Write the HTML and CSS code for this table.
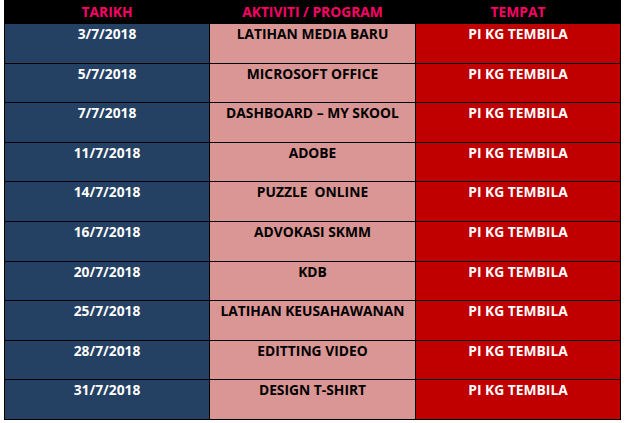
FILE: index.html
```html
<!DOCTYPE html>
<html>
<head>
<meta charset="utf-8">
<link rel="stylesheet" href="styles.css">
</head>
<body>
<div class="sheet">
  <div class="head">TARIKH</div>
  <div class="head">AKTIVITI / PROGRAM</div>
  <div class="head">TEMPAT</div>

  <div class="cell date">3/7/2018</div><div class="cell act">LATIHAN MEDIA BARU</div><div class="cell place">PI KG TEMBILA</div>
  <div class="cell date">5/7/2018</div><div class="cell act">MICROSOFT OFFICE</div><div class="cell place">PI KG TEMBILA</div>
  <div class="cell date">7/7/2018</div><div class="cell act">DASHBOARD – MY SKOOL</div><div class="cell place">PI KG TEMBILA</div>
  <div class="cell date">11/7/2018</div><div class="cell act">ADOBE</div><div class="cell place">PI KG TEMBILA</div>
  <div class="cell date">14/7/2018</div><div class="cell act">PUZZLE&nbsp; ONLINE</div><div class="cell place">PI KG TEMBILA</div>
  <div class="cell date">16/7/2018</div><div class="cell act">ADVOKASI SKMM</div><div class="cell place">PI KG TEMBILA</div>
  <div class="cell date">20/7/2018</div><div class="cell act">KDB</div><div class="cell place">PI KG TEMBILA</div>
  <div class="cell date">25/7/2018</div><div class="cell act">LATIHAN KEUSAHAWANAN</div><div class="cell place">PI KG TEMBILA</div>
  <div class="cell date">28/7/2018</div><div class="cell act">EDITTING VIDEO</div><div class="cell place">PI KG TEMBILA</div>
  <div class="cell date">31/7/2018</div><div class="cell act">DESIGN T-SHIRT</div><div class="cell place">PI KG TEMBILA</div>
</div>
</body>
</html>
```

FILE: styles.css
```css
html, body {
  margin: 0;
  padding: 0;
  background: #ffffff;
}
body {
  padding-left: 4px;
}
.sheet {
  width: 617px;
  box-sizing: border-box;
  background: #000000;
  display: grid;
  grid-template-columns: 204px 205px 204px;
  grid-template-rows: 23px repeat(10, 38.6px);
  column-gap: 1px;
  row-gap: 1px;
  padding: 0 1px 1px 1px;
  font-family: "Open Sans", "Noto Sans", sans-serif;
  font-weight: 700;
  font-size: 13.8px;
  line-height: 16px;
  text-align: center;
}
.head {
  color: #ff0066;
  padding-top: 4px;
  margin-bottom: -1px;
  background: #000000;
}
.cell {
  padding-top: 2px;
  white-space: nowrap;
}
.date {
  background: #244062;
  color: #ffffff;
}
.act {
  background: #da9694;
  color: #000000;
}
.place {
  background: #c00000;
  color: #ffffff;
}
```
